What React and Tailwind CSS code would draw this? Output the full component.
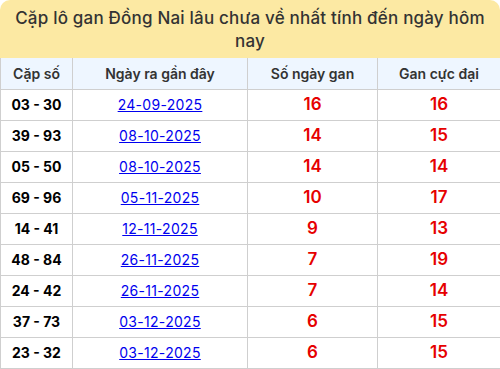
import React from 'react'

const rows = [
    ["03 - 30", "24-09-2025", 16, 16],
    ["39 - 93", "08-10-2025", 14, 15],
    ["05 - 50", "08-10-2025", 14, 14],
    ["69 - 96", "05-11-2025", 10, 17],
    ["14 - 41", "12-11-2025", 9, 13],
    ["48 - 84", "26-11-2025", 7, 19],
    ["24 - 42", "26-11-2025", 7, 14],
    ["37 - 73", "03-12-2025", 6, 15],
    ["23 - 32", "03-12-2025", 6, 15],
]

export default function App() {
    return (
        <div className="w-[500px] bg-white font-['Inter',sans-serif] text-[#333]">
            {/* Title */}
            <div className="h-[58px] bg-[#fce9a3] rounded-t-[10px] px-2 pt-[7px] text-center text-[17px] leading-[23px] font-medium tracking-[0.2px]">
                Cặp lô gan Đồng Nai lâu chưa về nhất tính đến ngày hôm nay
            </div>

            <table className="w-[500px] border-collapse table-fixed text-center">
                <colgroup>
                    <col className="w-[72px]" />
                    <col className="w-[175px]" />
                    <col className="w-[130px]" />
                    <col className="w-[123px]" />
                </colgroup>
                <thead>
                    <tr className="h-[31px] bg-[#eef6ff] text-[14px]">
                        <th className="border border-[#cfcfcf] border-t-0 font-semibold">Cặp số</th>
                        <th className="border border-[#cfcfcf] border-t-0 font-semibold">Ngày ra gần đây</th>
                        <th className="border border-[#cfcfcf] border-t-0 font-semibold">Số ngày gan</th>
                        <th className="border border-[#cfcfcf] border-t-0 font-semibold">Gan cực đại</th>
                    </tr>
                </thead>
                <tbody>
                    {rows.map((r, i) => (
                        <tr key={i} className="h-[31px]">
                            <td className="border border-[#cfcfcf] text-[14px] font-bold text-black">{r[0]}</td>
                            <td className="border border-[#cfcfcf] text-[14px] tracking-[0.3px]">
                                <a href="#" className="text-[#0000ee] underline">{r[1]}</a>
                            </td>
                            <td className="border border-[#cfcfcf] text-[17px] font-semibold text-[#e60000]">{r[2]}</td>
                            <td className="border border-[#cfcfcf] text-[17px] font-semibold text-[#e60000]">{r[3]}</td>
                        </tr>
                    ))}
                </tbody>
            </table>
        </div>
    )
}
